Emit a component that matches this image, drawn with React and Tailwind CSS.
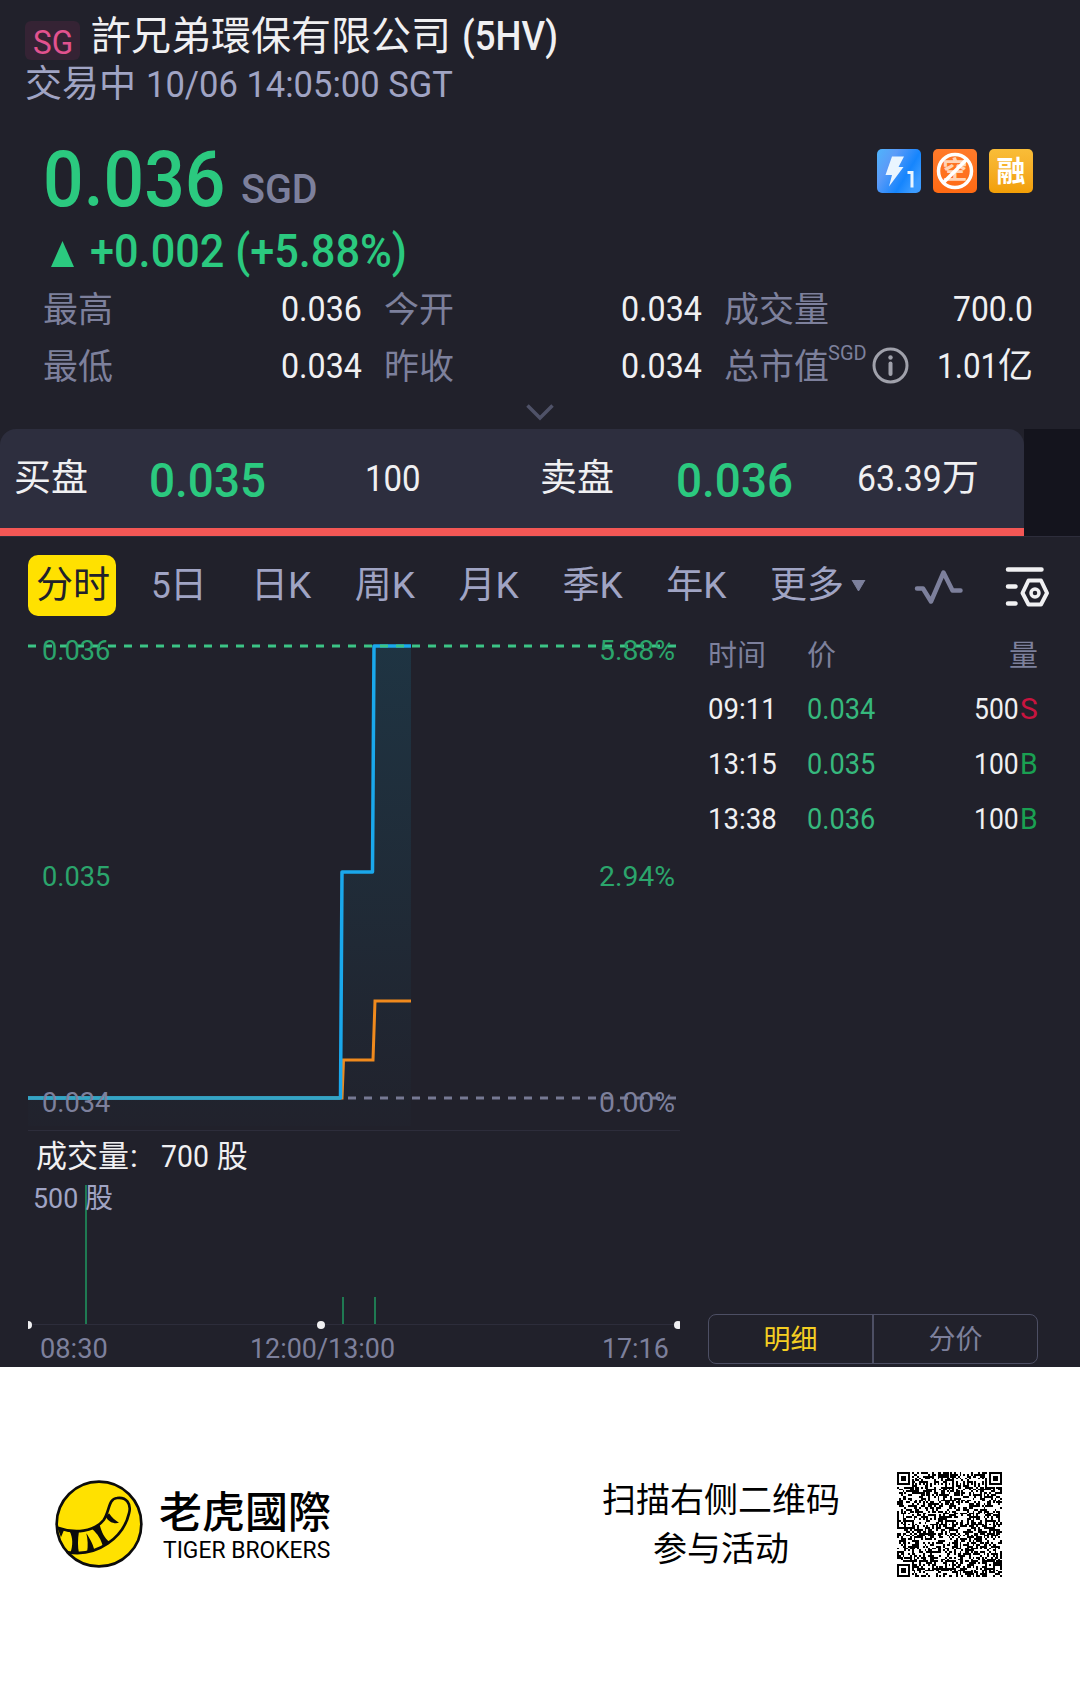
import React, { useLayoutEffect, useRef, useState } from 'react';

// Roboto runs wider than the DIN figures used here, so every run of
// figures is squeezed to the width it should take.
function Fit({ w, className = '', children }) {
  const ref = useRef(null);
  const [scale, setScale] = useState(1);
  useLayoutEffect(() => {
    setScale(w / ref.current.offsetWidth);
  }, [w, children]);
  return (
    <span className={`block shrink-0 whitespace-nowrap ${className}`} style={{ width: w }}>
      <span ref={ref} className="inline-block origin-left" style={{ transform: `scaleX(${scale})` }}>
        {children}
      </span>
    </span>
  );
}

const trades = [
  { time: '09:11', price: '0.034', volume: '500', side: 'S' },
  { time: '13:15', price: '0.035', volume: '100', side: 'B' },
  { time: '13:38', price: '0.036', volume: '100', side: 'B' },
];

const periods = ['日', '周', '月', '季', '年'];

function Header() {
  return (
    <header className="h-[141px] pl-[25px]">
      <div className="flex h-[66px] items-start">
        <div className="mt-[21px] flex h-[39px] w-[55px] justify-center rounded-md bg-[#352334] pt-[5px] text-[33px] text-[#e2528f]">
          <Fit w={40}>SG</Fit>
        </div>
        <div className="ml-[11px] flex items-baseline pt-[17px] text-[40px] text-[#f0f0f2]">
          <span>許兄弟環保有限公司</span>
          <Fit w={96} className="ml-[11px] font-medium">(5HV)</Fit>
        </div>
      </div>
      <div className="flex items-baseline text-[37px] text-[#a0a4c4]">
        <span className="text-[37px]">交易中</span>
        <Fit w={307} className="ml-[10px]">10/06 14:05:00 SGT</Fit>
      </div>
    </header>
  );
}

function Badges() {
  return (
    <div className="mr-[47px] mt-2 flex gap-3">
      <svg width="44" height="44" viewBox="0 0 44 44">
        <defs>
          <linearGradient id="blue" x1="0" y1="0" x2="1" y2="0.6">
            <stop offset="0" stopColor="#4fb4fb" />
            <stop offset="0.35" stopColor="#5b9bf8" />
            <stop offset="0.75" stopColor="#1585fd" />
            <stop offset="1" stopColor="#3b9bff" />
          </linearGradient>
        </defs>
        <rect width="44" height="44" rx="5" fill="url(#blue)" />
        <path d="M15 7.500H27L21.500 18H26.500L12 37.500L15 26H8.500Z" fill="#e9f5ff" />
        <path d="M30.500 23.500H35V38.500" fill="none" stroke="#e9f5ff" strokeWidth="3" />
      </svg>
      <div className="relative flex h-11 w-11 justify-center rounded-[5px] bg-linear-to-b from-[#ff7a2a] to-[#ff6a13] pt-[9px] text-[25px] font-bold text-[#ffd3b5]">
        空
        <svg className="absolute inset-0" width="44" height="44" viewBox="0 0 44 44" fill="none" stroke="#fff" strokeWidth="3.500">
          <circle cx="22" cy="22" r="16.500" />
          <path d="M10.500 33.500 33.500 10.500" />
        </svg>
      </div>
      <div className="flex h-11 w-11 justify-center rounded-[5px] bg-linear-to-b from-[#f9bd38] to-[#f29f05] pt-[9px] text-[29px] font-bold text-white">
        融
      </div>
    </div>
  );
}

function Quote() {
  return (
    <section className="h-[151px]">
      <div className="flex h-[87px] items-start justify-between pl-[43px]">
        <div className="flex items-start font-medium">
          <Fit w={182} className="mt-px text-[77px] text-[#2bc97f]">0.036</Fit>
          <Fit w={77} className="ml-[16px] mt-[29px] text-[40px] text-[#7d809c]">SGD</Fit>
        </div>
        <Badges />
      </div>
      <div className="flex items-baseline pl-[51px] text-[46px] font-medium text-[#2bc97f]">
        <svg width="23" height="26" viewBox="0 0 23 26">
          <path d="M11.500 0 23 26H0Z" fill="#2bc97f" />
        </svg>
        <Fit w={317} className="ml-[16px]">+0.002 (+5.88%)</Fit>
      </div>
    </section>
  );
}

function Stat({ label, value, w, unit }) {
  return (
    <div className="flex h-[57px] items-start justify-between text-[35px] text-[#f0f0f2]">
      <span className="mt-px shrink-0 text-[#7d809c]">{label}</span>
      <span className="flex items-baseline">
        <Fit w={w}>{value}</Fit>
        {unit}
      </span>
    </div>
  );
}

function Stats() {
  return (
    <section className="h-[137px]">
      <div className="grid grid-cols-[319px_318px_309px] gap-x-[22px] pl-[43px]">
        <Stat label="最高" value="0.036" w={81} />
        <Stat label="今开" value="0.034" w={81} />
        <Stat label="成交量" value="700.0" w={80} />
        <Stat label="最低" value="0.034" w={81} />
        <Stat label="昨收" value="0.034" w={81} />
        <Stat
          label={
            <span className="relative">
              总市值
              <span className="absolute -top-[4px] left-[104px] text-[20px]">
                <Fit w={39}>SGD</Fit>
              </span>
              <svg className="absolute top-0 left-[148px]" width="37" height="37" viewBox="0 0 37 37" fill="none" stroke="#a0a1ab" strokeWidth="3">
                <circle cx="18.500" cy="18.500" r="16.500" />
                <path d="M18.500 16.500V27" strokeWidth="4" strokeLinecap="round" />
                <circle cx="18.500" cy="10.500" r="2.200" fill="#a0a1ab" stroke="none" />
              </svg>
            </span>
          }
          value="1.01"
          w={61}
          unit="亿"
        />
      </div>
      <svg className="mx-auto -mt-[2px]" width="28" height="17" viewBox="0 0 28 17" fill="none" stroke="#4f5268" strokeWidth="3.500">
        <path d="M1.500 1.500 14 14 26.500 1.500" />
      </svg>
    </section>
  );
}

function BidAsk() {
  return (
    <section className="h-[108px] border-b border-[#2d2d3b] bg-[#14141d]">
      <div className="h-full w-[1024px] bg-[#21212b]">
        <div className="flex h-full items-start rounded-t-[16px] border-b-8 border-[#f35755] bg-[#2d2e3e] pl-[14px] pt-[27px] text-[37px] text-[#f0f0f2]">
          <span className="mt-[4px]">买盘</span>
          <Fit w={117} className="ml-[61px] text-[49px] font-medium text-[#2bc97f]">0.035</Fit>
          <Fit w={56} className="ml-[99px] mt-[5px] text-[36.5px]">100</Fit>
          <span className="ml-[119px] mt-[4px]">卖盘</span>
          <Fit w={117} className="ml-[62px] text-[49px] font-medium text-[#2bc97f]">0.036</Fit>
          <Fit w={85} className="ml-[64px] mt-[5px] text-[36.5px]">63.39</Fit>
          <span className="mt-[4px] text-[37px]">万</span>
        </div>
      </div>
    </section>
  );
}

function Tabs() {
  return (
    <nav className="flex h-[86px] items-start pl-7 pt-[18px] text-[37px] text-[#a0a4c4]">
      <div className="flex h-[61px] w-[88px] justify-center rounded-[10px] bg-[#ffe100] pl-[2px] pt-[12px] text-[#21212b]">
        分时
      </div>
      <div className="ml-[35px] flex w-[100px] items-baseline pt-[12px]">
        <Fit w={20}>5</Fit>
        <span className="-ml-px">日</span>
      </div>
      {periods.map((p) => (
        <div key={p} className="flex w-[103.8px] items-baseline pt-[12px]">
          <span>{p}</span>
          <Fit w={23}>K</Fit>
        </div>
      ))}
      <span className="pt-[12px]">更多</span>
      <svg className="ml-[7px] mt-[25px]" width="15" height="11" viewBox="0 0 15 11">
        <path d="M1 0H14L7.500 11Z" fill="#7d809c" stroke="#7d809c" strokeLinejoin="round" />
      </svg>
      <svg className="ml-[48px] mt-[15px]" width="49" height="34" viewBox="0 0 49 34" fill="none" stroke="#7d809c" strokeWidth="4.500" strokeLinecap="round" strokeLinejoin="round">
        <path d="M3 18.500H9L17 31.500 29.500 2.500 38.500 20.500H46.500" />
      </svg>
      <svg className="ml-[42px] mt-[11px]" width="45" height="41" viewBox="0 0 45 41" fill="none" stroke="#f0f0f2" strokeWidth="4.500" strokeLinecap="round" strokeLinejoin="round">
        <path d="M3 3.500H36.500M3 20.500H10.500M3 37.500H10.500" />
        <path d="M23.500 14.500H36L42 27 36 38.500H23.500L17.500 27Z" strokeWidth="4" />
        <circle cx="30" cy="27" r="4" strokeWidth="3.500" />
      </svg>
    </nav>
  );
}

function PriceChart() {
  return (
    <div className="relative h-[507px] text-[28px] text-[#2ba56c]">
      <svg className="absolute inset-0" width="652" height="507" viewBox="28 623 652 507" fill="none">
        <defs>
          <linearGradient id="area" x1="0" y1="646" x2="0" y2="1126" gradientUnits="userSpaceOnUse">
            <stop offset="0" stopColor="#10a0c8" stopOpacity="0.15" />
            <stop offset="1" stopColor="#10a0c8" stopOpacity="0.01" />
          </linearGradient>
        </defs>
        <path d="M28 1126V1098H341V872H373V646H411V1126Z" fill="url(#area)" />
        <path d="M28 1098H342L343.500 1060H373L375 1001H411" stroke="#f08a1d" strokeWidth="3" />
        <path d="M28 1098H340.500L342 872H372.500L374 646H411" stroke="#1aa8ec" strokeWidth="3.500" strokeLinejoin="round" />
        <path d="M28 646H677" stroke="#3cc486" strokeWidth="3" strokeDasharray="8 8" />
        <path d="M28 1098H340" stroke="#35a5c4" strokeWidth="3" />
        <path d="M348 1098H677" stroke="#767993" strokeWidth="3" strokeDasharray="8 8" />
      </svg>
      <div className="relative flex h-full flex-col pl-[14px] pr-[5px] pt-[14px]">
        <div className="flex h-[226px] justify-between">
          <Fit w={68}>0.036</Fit>
          <Fit w={76}>5.88%</Fit>
        </div>
        <div className="flex h-[226px] justify-between">
          <Fit w={68}>0.035</Fit>
          <Fit w={76}>2.94%</Fit>
        </div>
        <div className="flex justify-between text-[#7d809c]">
          <Fit w={68}>0.034</Fit>
          <Fit w={76}>0.00%</Fit>
        </div>
      </div>
    </div>
  );
}

function VolumeChart() {
  return (
    <div className="relative h-[237px]">
      <svg className="absolute inset-0" width="652" height="237" viewBox="28 1130 652 237">
        <path d="M28 1130.500H680M28 1324.500H680" stroke="#2d2d3b" />
        <path d="M86 1185V1324M343 1297V1324M375 1297V1324" stroke="#1f7a52" strokeWidth="2" />
        <g fill="#f0f0f2">
          <circle cx="28" cy="1325" r="4" />
          <circle cx="321" cy="1325" r="4" />
          <circle cx="678" cy="1325" r="4" />
        </g>
      </svg>
      <div className="relative pt-[10px]">
        <div className="flex h-[45px] items-baseline pl-[8px] text-[32px] text-[#f0f0f2]">
          <span className="text-[31px]">成交量</span>
          <span className="ml-px">:</span>
          <Fit w={48} className="ml-[23px]">700</Fit>
          <span className="ml-[8px] text-[31px]">股</span>
        </div>
        <div className="flex h-[150px] items-baseline pl-[5px] text-[28px] text-[#a0a4c4]">
          <Fit w={45}>500</Fit>
          <span className="ml-[7px]">股</span>
        </div>
        <div className="flex pl-[12px] text-[28px] text-[#7d809c]">
          <Fit w={68}>08:30</Fit>
          <Fit w={145} className="ml-[142px]">12:00/13:00</Fit>
          <Fit w={67} className="ml-[207px]">17:16</Fit>
        </div>
      </div>
    </div>
  );
}

function Trades() {
  return (
    <div className="flex h-[744px] w-[330px] flex-col text-[30px] text-[#f0f0f2]">
      <div className="flex h-[58px] items-baseline pt-[19px] text-[29px] text-[#7d809c]">
        <span className="w-[99px]">时间</span>
        <span>价</span>
        <span className="ml-auto">量</span>
      </div>
      {trades.map((t) => (
        <div key={t.time} className="flex h-[55px] items-baseline pt-[13px]">
          <Fit w={69}>{t.time}</Fit>
          <Fit w={68} className="ml-[30px] text-[#36b87d]">{t.price}</Fit>
          <Fit w={45} className="ml-auto">{t.volume}</Fit>
          <Fit w={18} className={t.side === 'S' ? 'ml-px text-[#c8143f]' : 'ml-px text-[#1aa052]'}>{t.side}</Fit>
        </div>
      ))}
      <div className="mb-[3px] mt-auto flex h-[50px] rounded-lg border border-[#4d4f64] text-[27px]">
        <div className="flex flex-1 justify-center border-r-2 border-[#4d4f64] pt-[12px] text-[#f5cf22]">明细</div>
        <div className="flex flex-1 justify-center pt-[12px] text-[#7d809c]">分价</div>
      </div>
    </div>
  );
}

function TigerLogo() {
  return (
    <svg width="88" height="88" viewBox="0 0 264 264" fill="none" stroke="#0c0c0c" strokeWidth="8" strokeLinecap="round" strokeLinejoin="round">
      <circle cx="132" cy="132" r="127" fill="#ffe100" />
      <path d="M8 143C60 162 118 155 146 120C164 94 160 56 186 54C214 50 230 72 222 100C206 170 130 232 38 217" />
      <g fill="#0c0c0c" stroke="none">
        <path d="M6 140L28 148L18 172Z" />
        <path d="M44 154L72 153C68 180 68 200 72 220L46 220C54 196 54 174 44 154Z" />
        <path d="M94 160C102 172 114 192 118 210L96 218C100 196 98 178 94 160Z" />
        <path d="M112 148L134 134C140 156 148 174 164 186L144 200C138 178 128 162 112 148Z" />
        <path d="M152 110L162 100C171 113 180 121 192 128C180 132 162 128 152 110Z" />
      </g>
    </svg>
  );
}

const QR_SIZE = 57;

function inFinder(x, y) {
  const spots = [[0, 0], [QR_SIZE - 7, 0], [0, QR_SIZE - 7]];
  for (const [fx, fy] of spots) {
    const dx = x - fx;
    const dy = y - fy;
    if (dx >= -1 && dx <= 7 && dy >= -1 && dy <= 7) {
      const d = Math.max(Math.abs(dx - 3), Math.abs(dy - 3));
      return d === 3 || d <= 1 ? 1 : 0;
    }
  }
  return -1;
}

function qrPath() {
  let seed = 20211006;
  let d = '';
  for (let y = 0; y < QR_SIZE; y++) {
    for (let x = 0; x < QR_SIZE; x++) {
      seed = (seed * 48271) % 2147483647;
      let on = seed / 2147483647 < 0.5;
      if (x === 6 || y === 6) on = (x + y) % 2 === 0;
      for (const cx of [6, 28, 50]) {
        for (const cy of [6, 28, 50]) {
          const r = Math.max(Math.abs(x - cx), Math.abs(y - cy));
          if (r <= 2) on = r !== 1;
        }
      }
      const f = inFinder(x, y);
      if (f >= 0) on = f === 1;
      if (on) d += `M${x} ${y}h1v1h-1z`;
    }
  }
  return d;
}

function Footer() {
  return (
    <footer className="flex h-[316px] items-start bg-white pl-[55px] text-black">
      <div className="mt-[113px]">
        <TigerLogo />
      </div>
      <div className="ml-[16px] mt-[125px]">
        <div className="text-[43px] font-medium">老虎國際</div>
        <Fit w={167} className="ml-[4px] mt-[4px] text-[23px]">TIGER BROKERS</Fit>
      </div>
      <div className="ml-auto mt-[109px] text-center text-[34px] leading-[49px]">
        <div>扫描右侧二维码</div>
        <div>参与活动</div>
      </div>
      <svg className="ml-[57px] mr-[78px] mt-[105px]" width="105" height="105" viewBox="0 0 57 57" shapeRendering="crispEdges">
        <path d={qrPath()} fill="#000" />
      </svg>
    </footer>
  );
}

export default function App() {
  return (
    <div className="h-[1683px] w-[1080px] overflow-hidden bg-[#21212b] font-['Roboto','Noto_Sans_CJK_SC',sans-serif] leading-none">
      <Header />
      <Quote />
      <Stats />
      <BidAsk />
      <Tabs />
      <main className="flex pl-7">
        <div className="mr-7 w-[652px]">
          <PriceChart />
          <VolumeChart />
        </div>
        <Trades />
      </main>
      <Footer />
    </div>
  );
}
